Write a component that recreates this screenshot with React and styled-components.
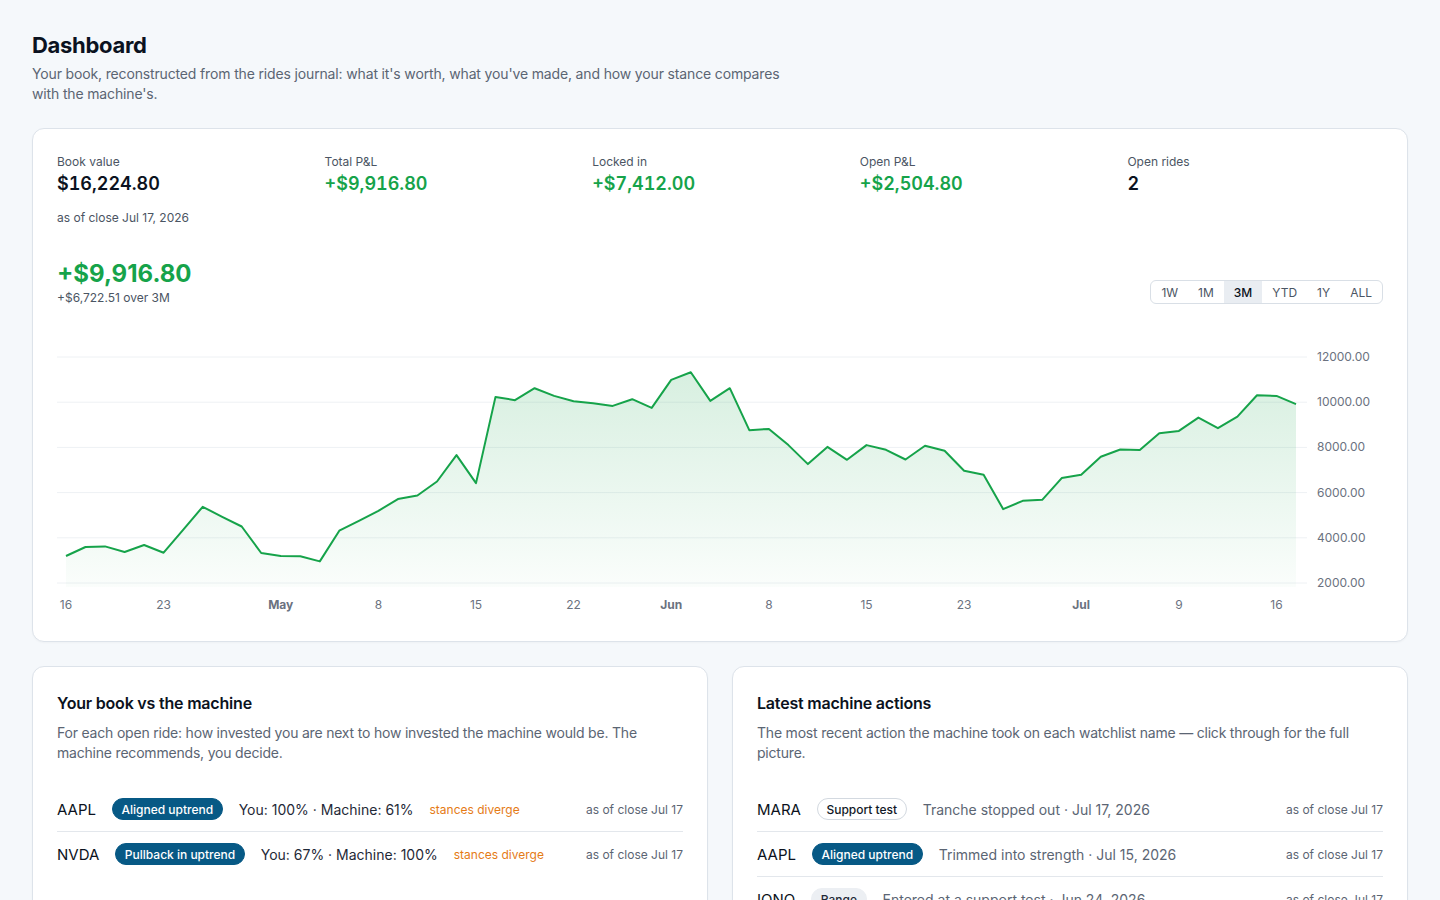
import React from "react";
import styled, { createGlobalStyle } from "styled-components";

const GlobalStyle = createGlobalStyle`
  * { box-sizing: border-box; }
  html, body {
    margin: 0;
    padding: 0;
    background: #f5f8fb;
    font-family: Inter, "Noto Sans", "Liberation Sans", sans-serif;
    color: #0b1220;
    -webkit-font-smoothing: antialiased;
  }
`;

const Page = styled.main`
  padding: 31px 32px 32px;
  display: flex;
  flex-direction: column;
`;

const Title = styled.h1`
  margin: 0;
  font-size: 22px;
  line-height: 29px;
  font-weight: 700;
  letter-spacing: -0.3px;
  color: #0b1220;
`;

const Lead = styled.p`
  margin: 4px 0 0;
  max-width: 760px;
  font-size: 14px;
  line-height: 20px;
  letter-spacing: -0.15px;
  color: #5b6573;
`;

const Card = styled.section`
  background: #ffffff;
  border: 1px solid #dde3ea;
  border-radius: 12px;
  padding: 24px 24px 23px;
  box-shadow: 0 1px 2px rgba(15, 23, 42, 0.03);
`;

const BookCard = styled(Card)`
  margin-top: 24px;
  padding-top: 25px;
`;

const StatGrid = styled.div`
  display: grid;
  grid-template-columns: repeat(5, 1fr);
  column-gap: 12px;
`;

const Stat = styled.div`
  display: flex;
  flex-direction: column;
`;

const StatLabel = styled.span`
  font-size: 12px;
  line-height: 16px;
  color: #4b5563;
`;

const StatValue = styled.span`
  margin-top: 2px;
  font-size: 18px;
  line-height: 24px;
  font-weight: 600;
  font-variant-numeric: tabular-nums;
  color: ${(p) => (p.$tone === "gain" ? "#16a34a" : "#0b1220")};
`;

const StatNote = styled.span`
  margin-top: 14px;
  font-size: 12px;
  line-height: 16px;
  color: #4b5563;
`;

const ChartHead = styled.div`
  margin-top: 32px;
  display: flex;
  align-items: flex-end;
  justify-content: space-between;
`;

const Headline = styled.div`
  display: flex;
  flex-direction: column;
`;

const BigGain = styled.span`
  font-size: 24px;
  line-height: 32px;
  font-weight: 700;
  color: #16a34a;
`;

const SubGain = styled.span`
  font-size: 12px;
  line-height: 16px;
  color: #4b5563;
`;

const Ranges = styled.div`
  display: flex;
  margin-bottom: 2px;
  border: 1px solid #d9dfe6;
  border-radius: 6px;
  overflow: hidden;
`;

const RangeButton = styled.button`
  border: 0;
  margin: 0;
  height: 22px;
  padding: 0 10px;
  font-family: inherit;
  font-size: 12px;
  color: ${(p) => (p.$active ? "#0b1220" : "#4b5563")};
  font-weight: ${(p) => (p.$active ? 500 : 400)};
  background: ${(p) => (p.$active ? "#e9edf2" : "transparent")};
  cursor: pointer;
`;

const ChartBox = styled.div`
  margin-top: 24px;
  height: 288px;
`;

const ChartSvg = styled.svg`
  display: block;
  width: 100%;
  height: 100%;
  font-family: Inter, "Noto Sans", "Liberation Sans", sans-serif;
`;

const Columns = styled.div`
  margin-top: 24px;
  display: grid;
  grid-template-columns: 1fr 1fr;
  gap: 24px;
`;

const PanelTitle = styled.h2`
  margin: 0;
  font-size: 16px;
  line-height: 24px;
  font-weight: 600;
  letter-spacing: -0.2px;
  color: #0b1220;
`;

const PanelLead = styled.p`
  margin: 8px 0 0;
  font-size: 14px;
  line-height: 20px;
  letter-spacing: -0.2px;
  color: #5b6573;
`;

const List = styled.ul`
  list-style: none;
  margin: 24px 0 0;
  padding: 0;
`;

const Row = styled.li`
  display: flex;
  align-items: center;
  gap: 16px;
  height: 44px;
  & + & {
    height: 45px;
    border-top: 1px solid #e3e7ec;
  }
`;

const Ticker = styled.span`
  font-size: 15px;
  font-weight: 400;
  color: #0b1220;
`;

const badgeLook = {
  solid: "background: #075985; color: #ffffff; border-color: #075985;",
  outline: "background: #ffffff; color: #111827; border-color: #d3d9e0;",
  muted: "background: #eceff3; color: #1f2937; border-color: #eceff3;",
};

const Badge = styled.span`
  display: inline-flex;
  align-items: center;
  height: 22px;
  padding: 0 8.5px;
  border: 1px solid;
  border-radius: 999px;
  font-size: 12px;
  font-weight: 500;
  white-space: nowrap;
  ${(p) => badgeLook[p.$look]}
`;

const Stance = styled.span`
  font-size: 14px;
  color: #1f2937;
`;

const Diverge = styled.span`
  font-size: 12px;
  color: #e57b16;
`;

const Action = styled.span`
  font-size: 14px;
  color: #5b6573;
`;

const AsOf = styled.span`
  margin-left: auto;
  font-size: 12px;
  color: #5b6573;
`;

// 3M of book P&L, one value per trading day (Apr 16 → Jul 17)
const series = [
  3194, 3591, 3618, 3370, 3680, 3339, 4356, 5372, 4930, 4502,
  3326, 3193, 3185, 2955, 4312, 4754, 5196, 5713, 5872, 6491,
  7658, 6420, 10234, 10089, 10619, 10279, 10044, 9956, 9837, 10133,
  9748, 10986, 11326, 10058, 10619, 8763, 8820, 8100, 7260, 8024,
  7450, 8100, 7892, 7463, 8069, 7848, 6964, 6787, 5271, 5638,
  5682, 6641, 6787, 7582, 7905, 7879, 8630, 8732, 9320, 8851,
  9364, 10310, 10279, 9916.8,
];

const ticks = [
  { i: 0, label: "16" },
  { i: 5, label: "23" },
  { i: 11, label: "May", month: true },
  { i: 16, label: "8" },
  { i: 21, label: "15" },
  { i: 26, label: "22" },
  { i: 31, label: "Jun", month: true },
  { i: 36, label: "8" },
  { i: 41, label: "15" },
  { i: 46, label: "23" },
  { i: 52, label: "Jul", month: true },
  { i: 57, label: "9" },
  { i: 62, label: "16" },
];

const W = 1326;
const H = 288;
const X0 = 9;
const X1 = 1239;
const GRID_END = 1250;
const Y_TOP = 27;
const Y_BOT = 253;
const V_MIN = 2000;
const V_MAX = 12000;

const px = (i) => X0 + (i * (X1 - X0)) / (series.length - 1);
const py = (v) => Y_BOT - ((v - V_MIN) / (V_MAX - V_MIN)) * (Y_BOT - Y_TOP);

function PnlChart() {
  const line = series.map((v, i) => `${i ? "L" : "M"}${px(i).toFixed(1)},${py(v).toFixed(1)}`).join(" ");
  const area = `${line} L${px(series.length - 1)},${Y_BOT + 4} L${px(0)},${Y_BOT + 4} Z`;
  const levels = [12000, 10000, 8000, 6000, 4000, 2000];
  return (
    <ChartSvg viewBox={`0 0 ${W} ${H}`}>
      <defs>
        <linearGradient id="pnlFill" x1="0" y1="0" x2="0" y2="1">
          <stop offset="0%" stopColor="#16a34a" stopOpacity="0.17" />
          <stop offset="100%" stopColor="#16a34a" stopOpacity="0.02" />
        </linearGradient>
      </defs>
      {levels.map((v) => (
        <g key={v}>
          <line x1="0" x2={GRID_END} y1={py(v)} y2={py(v)} stroke="#eef1f4" strokeWidth="1" />
          <text x="1260" y={py(v) + 4} fontSize="12" fill="#6b7280">
            {v.toFixed(2)}
          </text>
        </g>
      ))}
      <path d={area} fill="url(#pnlFill)" />
      <path d={line} fill="none" stroke="#16a34a" strokeWidth="2" strokeLinejoin="round" />
      {ticks.map((t) => (
        <text
          key={t.i}
          x={px(t.i)}
          y="279"
          fontSize="12"
          textAnchor="middle"
          fill="#6b7280"
          fontWeight={t.month ? 700 : 400}
        >
          {t.label}
        </text>
      ))}
    </ChartSvg>
  );
}

const stats = [
  { label: "Book value", value: "$16,224.80", note: "as of close Jul 17, 2026" },
  { label: "Total P&L", value: "+$9,916.80", tone: "gain" },
  { label: "Locked in", value: "+$7,412.00", tone: "gain" },
  { label: "Open P&L", value: "+$2,504.80", tone: "gain" },
  { label: "Open rides", value: "2" },
];

const ranges = ["1W", "1M", "3M", "YTD", "1Y", "ALL"];

const stances = [
  { ticker: "AAPL", badge: "Aligned uptrend", you: "100%", machine: "61%" },
  { ticker: "NVDA", badge: "Pullback in uptrend", you: "67%", machine: "100%" },
];

const actions = [
  { ticker: "MARA", badge: "Support test", look: "outline", text: "Tranche stopped out · Jul 17, 2026" },
  { ticker: "AAPL", badge: "Aligned uptrend", look: "solid", text: "Trimmed into strength · Jul 15, 2026" },
  { ticker: "IONQ", badge: "Range", look: "muted", text: "Entered at a support test · Jun 24, 2026" },
];

export default function App() {
  return (
    <>
      <GlobalStyle />
      <Page>
        <Title>Dashboard</Title>
        <Lead>
          Your book, reconstructed from the rides journal: what it's worth, what you've made, and how your
          stance compares with the machine's.
        </Lead>

        <BookCard>
          <StatGrid>
            {stats.map((s) => (
              <Stat key={s.label}>
                <StatLabel>{s.label}</StatLabel>
                <StatValue $tone={s.tone}>{s.value}</StatValue>
                {s.note && <StatNote>{s.note}</StatNote>}
              </Stat>
            ))}
          </StatGrid>

          <ChartHead>
            <Headline>
              <BigGain>+$9,916.80</BigGain>
              <SubGain>+$6,722.51 over 3M</SubGain>
            </Headline>
            <Ranges>
              {ranges.map((r) => (
                <RangeButton key={r} $active={r === "3M"}>
                  {r}
                </RangeButton>
              ))}
            </Ranges>
          </ChartHead>

          <ChartBox>
            <PnlChart />
          </ChartBox>
        </BookCard>

        <Columns>
          <Card>
            <PanelTitle>Your book vs the machine</PanelTitle>
            <PanelLead>
              For each open ride: how invested you are next to how invested the machine would be. The machine
              recommends, you decide.
            </PanelLead>
            <List>
              {stances.map((s) => (
                <Row key={s.ticker}>
                  <Ticker>{s.ticker}</Ticker>
                  <Badge $look="solid">{s.badge}</Badge>
                  <Stance>
                    You: {s.you} · Machine: {s.machine}
                  </Stance>
                  <Diverge>stances diverge</Diverge>
                  <AsOf>as of close Jul 17</AsOf>
                </Row>
              ))}
            </List>
          </Card>

          <Card>
            <PanelTitle>Latest machine actions</PanelTitle>
            <PanelLead>
              The most recent action the machine took on each watchlist name — click through for the full
              picture.
            </PanelLead>
            <List>
              {actions.map((a) => (
                <Row key={a.ticker}>
                  <Ticker>{a.ticker}</Ticker>
                  <Badge $look={a.look}>{a.badge}</Badge>
                  <Action>{a.text}</Action>
                  <AsOf>as of close Jul 17</AsOf>
                </Row>
              ))}
            </List>
          </Card>
        </Columns>
      </Page>
    </>
  );
}
